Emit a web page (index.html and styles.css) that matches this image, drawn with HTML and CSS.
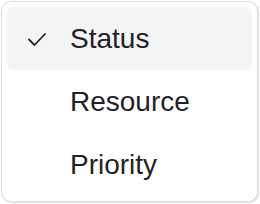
FILE: index.html
```html
<!DOCTYPE html>
<html lang="en">
<head>
  <meta charset="UTF-8">
  <title>Group by</title>
  <link rel="stylesheet" href="styles.css">
</head>
<body>
  <div class="menu">
    <div class="item active">
      <span class="check">
        <svg width="20" height="16" viewBox="0 0 20 16"><path d="M2 8.5l5.5 5.5L18 3" fill="none" stroke="#1f2329" stroke-width="1.8" stroke-linecap="round" stroke-linejoin="round"/></svg>
      </span>
      <span class="label">Status</span>
    </div>
    <div class="item">
      <span class="check"></span>
      <span class="label">Resource</span>
    </div>
    <div class="item">
      <span class="check"></span>
      <span class="label">Priority</span>
    </div>
  </div>
</body>
</html>
```

FILE: styles.css
```css
* { box-sizing: border-box; }
body {
  margin: 0;
  background: #fff;
  font-family: "Liberation Sans", Arial, sans-serif;
  color: #1f2329;
}
.menu {
  margin: 1px 2px 2px 1px;
  height: 201px;
  border: 1px solid #dcdcdc;
  border-radius: 10px;
  padding: 5px;
  background: #fff;
  box-shadow: 1px 1px 2px rgba(0, 0, 0, 0.12);
}
.item {
  height: 63px;
  display: flex;
  align-items: center;
  border-radius: 6px;
  font-size: 28px;
}
.item.active {
  background: #f4f4f5;
}
.check {
  width: 63px;
  padding-left: 20px;
  display: flex;
  align-items: center;
}
.label {
  line-height: 1;
}
```
